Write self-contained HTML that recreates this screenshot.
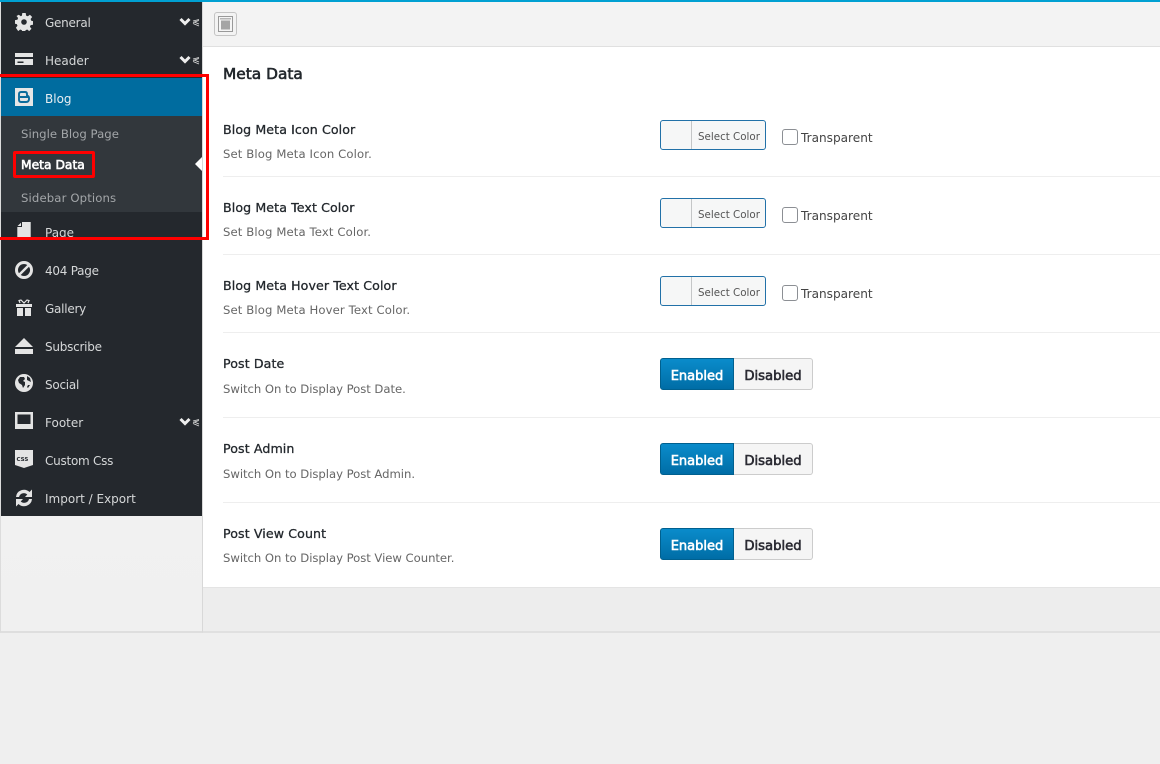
<!DOCTYPE html>
<html><head><meta charset="utf-8">
<style>
html,body{margin:0;padding:0;width:1160px;height:764px;overflow:hidden;background:#efefef;font-family:"DejaVu Sans",sans-serif;}
div,span,svg{position:absolute;box-sizing:border-box;white-space:nowrap}
.m{left:45px;font-size:12px;line-height:18px;color:#d5d7d8}
.n{letter-spacing:-.25px}
.s{left:21px;font-size:11.7px;line-height:18px;color:#a3a6a9}
.t{left:223px;font-size:12.6px;line-height:18px;color:#23282d;-webkit-text-stroke:.3px #23282d;letter-spacing:.1px}
.d{left:223px;font-size:11.65px;line-height:18px;color:#666;letter-spacing:.12px}
.w{letter-spacing:-.04px}
.l{left:223px;width:937px;height:1px;background:#eee}
.c{left:660px;width:106px;height:30px;border:1px solid #2271a8;border-radius:3px;background:#f6f7f7}
.c i{position:absolute;left:30px;top:0;width:1px;height:28px;background:#c4c6c7}
.c b{position:absolute;left:37px;top:7.500px;font-weight:normal;font-size:10.3px;line-height:16px;color:#555}
.k{left:782px;width:16px;height:16px;border:1px solid #8c8f94;border-radius:3px;background:#fff}
.r{left:801px;font-size:12.1px;line-height:18px;color:#444}
.en{left:660px;width:74px;height:32px;background:linear-gradient(#0a8ccb,#006da6);border:1px solid #00608f;border-radius:3px 0 0 3px;color:#fff;-webkit-text-stroke:.6px #fff;font-size:13px;line-height:35px;text-align:center}
.di{left:734px;width:79px;height:32px;background:#f5f5f5;border:1px solid #ccc;border-left:0;border-radius:0 3px 3px 0;color:#2b2b33;-webkit-text-stroke:.6px #2b2b33;font-size:13.2px;line-height:35px;text-align:center}
.ic{left:15px;width:18px;height:18px;fill:#e4e4e4}
.ar{left:178px;width:23px;height:12px}
</style></head><body>
<div style="left:0;top:0;width:1160px;height:2px;background:#00a0d2"></div>
<div style="left:0;top:2px;width:203px;height:631px;background:linear-gradient(#f6f6f6,#f0f0f0);border-left:1px solid #dcdcdc;border-right:1px solid #d8d8d8;border-bottom:2px solid #dedede"></div>
<div style="left:203px;top:2px;width:957px;height:45px;background:#f3f3f3;border-bottom:1px solid #e0e0e0"></div>
<div style="left:203px;top:47px;width:957px;height:541px;background:#fff;border-bottom:1px solid #e4e4e4"></div>
<div style="left:203px;top:588px;width:957px;height:44px;background:#ededed"></div>
<div style="left:203px;top:631px;width:957px;height:2px;background:#e0e0e0"></div>

<div style="left:214px;top:12px;width:23px;height:24px;border:1px solid #c4c4c4;border-radius:3px;background:#f3f3f3"></div>
<svg style="left:218px;top:16px" width="15" height="16" viewBox="0 0 15 16"><rect x=".5" y=".5" width="14" height="15" fill="#f5f5f5" stroke="#999"/><rect x="2" y="2" width="11" height="1.500" fill="#b5b5b5"/><rect x="3" y="4.500" width="9" height="9" fill="#a5a5a5"/></svg>

<div style="left:1px;top:2px;width:201px;height:514px;background:#24282d"></div>
<div style="left:1px;top:78px;width:201px;height:38px;background:#006c9f"></div>
<div style="left:1px;top:116px;width:201px;height:96px;background:#32373c"></div>

<svg class="ic" style="top:13px" viewBox="0 0 18 18"><path d="M7.300 0h3.400l.4 2.600 1.700.7L14.900 1.700l2.300 2.300-1.600 2 .7 1.700 1.700.4v3.600l-2.400.4-.7 1.700 1.600 2-2.300 2.300-2-1.600-1.700.7-.4 2.200H7.300l-.4-2.200-1.700-.7-2 1.600L.9 14.800l1.600-2-.7-1.700L0 10.700V7.100l2.400-.4.7-1.700-1.600-2L3.800 1.700l2 1.600 1.100-.7z M9 6.200a2.800 2.800 0 1 0 0 5.600 2.800 2.800 0 0 0 0-5.600z" fill-rule="evenodd"/></svg>
<svg class="ic" style="top:51px" viewBox="0 0 18 18"><path d="M0 2h18v4H0z M0 8h18v6H0z M2.500 10.500v1.500h6v-1.500z" fill-rule="evenodd"/></svg>
<div style="left:15px;top:88px;width:18px;height:18px;background:#e6e6e6"></div>
<svg style="left:18px;top:91px" width="12" height="12" viewBox="0 0 12 12"><path d="M3 1H7Q9 1 9 3V4.500Q11 5 11 7V8Q11 11 8 11H3Q1 11 1 9V3Q1 1 3 1ZM2 6H10" fill="none" stroke="#0c6c9c" stroke-width="1.900"/></svg>
<svg class="ic" style="top:222px" viewBox="0 0 18 18"><path d="M7 0H15.700V18H2.300V5H7z M2.500 4 6 .8V4z"/></svg>
<svg class="ic" style="top:261px" viewBox="0 0 18 18"><path d="M9 0a9 9 0 1 0 0 18A9 9 0 0 0 9 0zM9 3a6 6 0 0 1 3.300 1L4 12.300A6 6 0 0 1 9 3zm0 12a6 6 0 0 1-3.300-1L14 5.700A6 6 0 0 1 9 15z" fill-rule="evenodd"/></svg>
<svg class="ic" style="top:299px" viewBox="0 0 18 18"><path d="M1 5h16v3H1zM2 9h6v8H2zM10 9h6v8h-6z"/><path d="M5 4 4 1.500 6 1 9 4 12 1 14 1.500 13 4" fill="none" stroke="#e4e4e4" stroke-width="1.200"/></svg>
<svg class="ic" style="top:337px" viewBox="0 0 18 18"><path d="M9 1 18 10H0zM0 12h18v5H0z"/></svg>
<svg class="ic" style="top:374px" viewBox="0 0 18 18"><path d="M9 0a9 9 0 1 0 0 18A9 9 0 0 0 9 0zM5 3h4l1 2-2 2 2 1v3l-2 3-1-3-3-2-1-3zM12 2l3 2 1 4-2-1-2-1zM13 11h2l-2 3-1-1z" fill-rule="evenodd"/></svg>
<svg class="ic" style="top:412px" viewBox="0 0 18 18"><path d="M0 0h18v17H0zM2.500 2.500V12h13V2.500z" fill-rule="evenodd"/></svg>
<svg class="ic" style="top:450px" viewBox="0 0 18 18"><path d="M0 0h18v15l-9 3-9-3z"/></svg>
<span style="left:16.500px;top:456px;font-size:5.500px;line-height:8px;font-weight:bold;color:#24282d">CSS</span>
<svg class="ic" style="top:489px" viewBox="0 0 18 18"><path d="M1 8A8 8 0 0 1 14.500 3L17 .5V8H10L12.300 5.500A5 5 0 0 0 4 8zM17 10A8 8 0 0 1 3.500 15L1 17.500V10H8L5.700 12.500A5 5 0 0 0 14 10z"/></svg>

<div class="m n" style="top:14px">General</div>
<div class="m" style="top:52px">Header</div>
<div class="m" style="top:90px;color:#e8eef2">Blog</div>
<div class="s" style="top:125px;letter-spacing:.03px">Single Blog Page</div>
<div class="s" style="top:156px;color:#fff;font-size:12.3px;-webkit-text-stroke:.6px #fff">Meta Data</div>
<div class="s" style="top:189px;letter-spacing:.12px">Sidebar Options</div>
<div class="m" style="top:224px">Page</div>
<div class="m n" style="top:262px">404 Page</div>
<div class="m n" style="top:300px">Gallery</div>
<div class="m n" style="top:338px">Subscribe</div>
<div class="m n" style="top:376px">Social</div>
<div class="m" style="top:414px">Footer</div>
<div class="m n" style="top:452px">Custom Css</div>
<div class="m" style="top:490px">Import / Export</div>

<svg class="ar" style="top:16px" viewBox="0 0 23 12"><path d="M2.500 3 7 7.500 11.500 3" fill="none" stroke="#eee" stroke-width="3"/><path d="M15 5 21 3.500 M15 6.500 21 4.500M15 7.500 21 10M16 6 21 8" stroke="#ddd" stroke-width=".9" fill="none"/></svg>
<svg class="ar" style="top:54px" viewBox="0 0 23 12"><path d="M2.500 3 7 7.500 11.500 3" fill="none" stroke="#eee" stroke-width="3"/><path d="M15 5 21 3.500 M15 6.500 21 4.500M15 7.500 21 10M16 6 21 8" stroke="#ddd" stroke-width=".9" fill="none"/></svg>
<svg class="ar" style="top:416px" viewBox="0 0 23 12"><path d="M2.500 3 7 7.500 11.500 3" fill="none" stroke="#eee" stroke-width="3"/><path d="M15 5 21 3.500 M15 6.500 21 4.500M15 7.500 21 10M16 6 21 8" stroke="#ddd" stroke-width=".9" fill="none"/></svg>

<svg style="left:195px;top:157px" width="7" height="14" viewBox="0 0 7 14"><path d="M7 0V14L0 7z" fill="#fff"/></svg>

<div style="left:0;top:74px;width:209px;height:3px;background:#f00"></div>
<div style="left:206px;top:74px;width:3px;height:166px;background:#f00"></div>
<div style="left:0;top:237px;width:209px;height:3px;background:#f00"></div>
<div style="left:13px;top:151px;width:82px;height:27px;border:3px solid #f00;border-radius:2px"></div>

<div style="left:223px;top:64px;font-size:15.4px;line-height:20px;color:#23282d;-webkit-text-stroke:.6px #23282d">Meta Data</div>

<div class="t" style="top:120.500px">Blog Meta Icon Color</div>
<div class="d" style="top:145px">Set Blog Meta Icon Color.</div>
<div class="c" style="top:120px"><i></i><b>Select Color</b></div>
<div class="k" style="top:129px"></div><div class="r" style="top:129px">Transparent</div>
<div class="l" style="top:176px"></div>

<div class="t" style="top:198.500px">Blog Meta Text Color</div>
<div class="d" style="top:223px">Set Blog Meta Text Color.</div>
<div class="c" style="top:198px"><i></i><b>Select Color</b></div>
<div class="k" style="top:207px"></div><div class="r" style="top:207px">Transparent</div>
<div class="l" style="top:254px"></div>

<div class="t" style="top:276.500px">Blog Meta Hover Text Color</div>
<div class="d" style="top:301px">Set Blog Meta Hover Text Color.</div>
<div class="c" style="top:276px"><i></i><b>Select Color</b></div>
<div class="k" style="top:285px"></div><div class="r" style="top:285px">Transparent</div>
<div class="l" style="top:332px"></div>

<div class="t" style="top:354.500px">Post Date</div>
<div class="d w" style="top:380px">Switch On to Display Post Date.</div>
<div class="en" style="top:358px">Enabled</div><div class="di" style="top:358px">Disabled</div>
<div class="l" style="top:417px"></div>

<div class="t" style="top:439.500px">Post Admin</div>
<div class="d w" style="top:465px">Switch On to Display Post Admin.</div>
<div class="en" style="top:443px">Enabled</div><div class="di" style="top:443px">Disabled</div>
<div class="l" style="top:502px"></div>

<div class="t" style="top:524.500px">Post View Count</div>
<div class="d w" style="top:549px">Switch On to Display Post View Counter.</div>
<div class="en" style="top:528px">Enabled</div><div class="di" style="top:528px">Disabled</div>
</body></html>
